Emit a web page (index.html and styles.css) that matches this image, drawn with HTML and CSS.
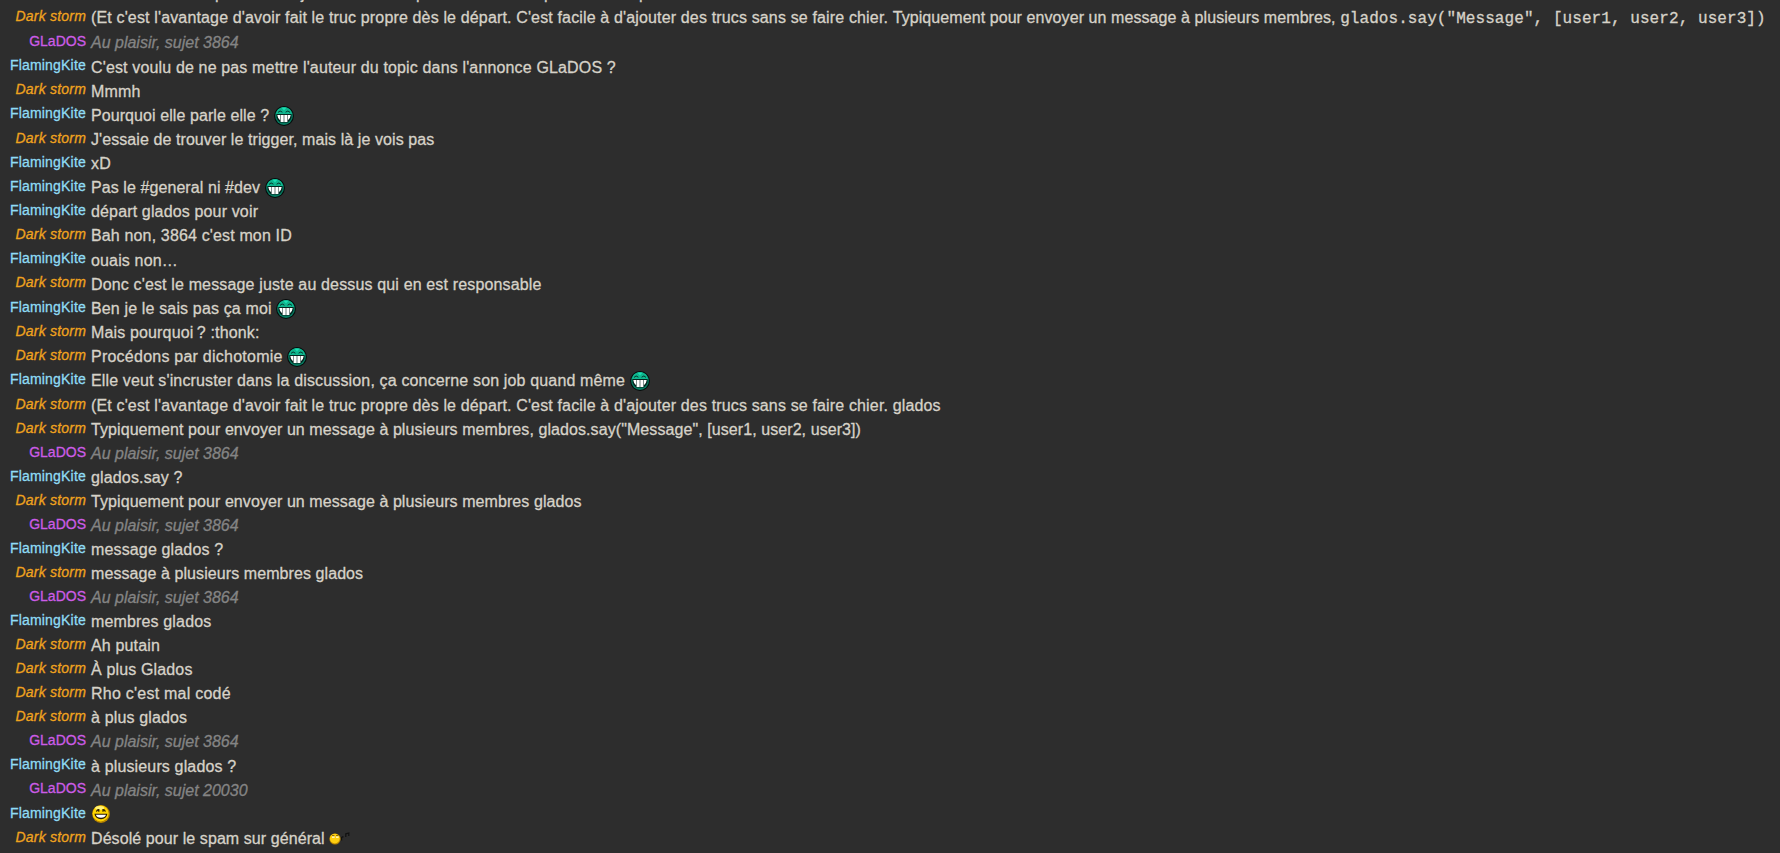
FILE: index.html
```html
<!DOCTYPE html>
<html lang="fr">
<head>
<meta charset="UTF-8">
<title>Chat</title>
<link rel="stylesheet" href="styles.css">
</head>
<body>

<svg class="defs" width="0" height="0">
  <symbol id="grin" viewBox="0 0 20 20">
    <circle cx="10" cy="10" r="9.9" fill="#050b0a"/>
    <circle cx="10" cy="10" r="8.9" fill="#067a60"/>
    <path d="M1.8 8 Q3 1.4 10 1.2 Q17 1.4 18.2 8z" fill="#0fb68e"/>
    <path d="M7.4 1.6h5.2L10 4.4z" fill="#1be0b4"/>
    <path d="M4 6.4 Q6 3.6 8.4 6.2 M11.6 6.2 Q14 3.6 16 6.4" fill="none" stroke="#04352b" stroke-width="1"/>
    <path d="M2.6 8 H17.4 V11.6 Q16.8 14.6 13.8 16.6 H6.2 Q3.2 14.6 2.6 11.6z" fill="#04251e"/>
    <path d="M3.3 8.9h2.8v5.4q-2.4-1.6-2.8-5.4z M6.6 8.9h3.1v7.1h-3.1z M10.3 8.9h3.1v7.1h-3.1z M13.9 8.9h2.8q-.4 3.8-2.8 5.4z" fill="#fff"/>
  </symbol>
  <symbol id="laugh" viewBox="0 0 18 18">
    <circle cx="9" cy="9" r="8.9" fill="#b98500"/>
    <circle cx="8.6" cy="8.4" r="8" fill="#ffd500"/>
    <ellipse cx="7.6" cy="3" rx="4.4" ry="1.9" fill="#fff27a"/>
    <path d="M4.4 6.6 Q5 4.6 6.8 4.6 V6.8 M13.4 6.6 Q12.8 4.6 11 4.6 V6.8" fill="none" stroke="#2b1c00" stroke-width="1.2"/>
    <path d="M2.4 8.8 H15.4 Q14.4 14.2 9 14.2 Q3.4 14.2 2.4 8.8z" fill="#2b1c00"/>
    <path d="M3.8 9.8 H14 Q13.2 12.8 9 12.8 Q4.6 12.8 3.8 9.8z" fill="#fff"/>
  </symbol>
  <symbol id="whistle" viewBox="0 0 22 14">
    <circle cx="6" cy="8" r="5.6" fill="#b98500"/>
    <circle cx="5.8" cy="7.6" r="4.9" fill="#ffcf10"/>
    <path d="M3 5.2h2.6v1.8H3z M7 5.2h2.6v1.8H7z" fill="#fff3b0"/>
    <path d="M3 4.6h2.4M7 4.6h2.4" stroke="#4a3300" stroke-width=".7"/>
    <path d="M12.6 9.6V6.4l1.8-.8M16.8 6V2.8l3-.8v3" fill="none" stroke="#111" stroke-width="1.2"/>
  </symbol>
</svg>

<div class="chat">
  <div class="row cut"><span>p</span><span>j</span><span>p</span><span>p</span><span>p</span></div>
  <div class="row tall"><span class="name storm">Dark storm</span><span class="msg">(Et c'est l'avantage d'avoir fait le truc propre dès le départ. C'est facile à d'ajouter des trucs sans se faire chier. <span class="snug">Typiquement pour envoyer un message à plusieurs membres, </span><code>glados.say("Message", [user1, user2, user3])</code></span></div>
  <div class="row"><span class="name glados">GLaDOS</span><span class="msg bot">Au plaisir, sujet 3864</span></div>
  <div class="row low"><span class="name kite">FlamingKite</span><span class="msg">C'est voulu de ne pas mettre l'auteur du topic dans l'annonce GLaDOS ?</span></div>
  <div class="row low"><span class="name storm">Dark storm</span><span class="msg">Mmmh</span></div>
  <div class="row tall low"><span class="name kite">FlamingKite</span><span class="msg snug">Pourquoi elle parle elle ? <svg class="smiley"><use href="#grin"/></svg></span></div>
  <div class="row"><span class="name storm">Dark storm</span><span class="msg snug">J'essaie de trouver le trigger, mais là je vois pas</span></div>
  <div class="row"><span class="name kite">FlamingKite</span><span class="msg">xD</span></div>
  <div class="row"><span class="name kite">FlamingKite</span><span class="msg snug">Pas le #general ni #dev <svg class="smiley"><use href="#grin"/></svg></span></div>
  <div class="row"><span class="name kite">FlamingKite</span><span class="msg">départ glados pour voir</span></div>
  <div class="row"><span class="name storm">Dark storm</span><span class="msg">Bah non, 3864 c'est mon ID</span></div>
  <div class="row low"><span class="name kite">FlamingKite</span><span class="msg">ouais non…</span></div>
  <div class="row tall low"><span class="name storm">Dark storm</span><span class="msg">Donc c'est le message juste au dessus qui en est responsable</span></div>
  <div class="row"><span class="name kite">FlamingKite</span><span class="msg">Ben je le sais pas ça moi <svg class="smiley"><use href="#grin"/></svg></span></div>
  <div class="row"><span class="name storm">Dark storm</span><span class="msg">Mais pourquoi&#8239;? :thonk:</span></div>
  <div class="row"><span class="name storm">Dark storm</span><span class="msg wide">Procédons par dichotomie <svg class="smiley"><use href="#grin"/></svg></span></div>
  <div class="row tall"><span class="name kite">FlamingKite</span><span class="msg">Elle veut s'incruster dans la discussion, ça concerne son job quand même <svg class="smiley"><use href="#grin"/></svg></span></div>
  <div class="row"><span class="name storm">Dark storm</span><span class="msg">(Et c'est l'avantage d'avoir fait le truc propre dès le départ. C'est facile à d'ajouter des trucs sans se faire chier. glados</span></div>
  <div class="row"><span class="name storm">Dark storm</span><span class="msg snug">Typiquement pour envoyer un message à plusieurs membres, glados.say("Message", [user1, user2, user3])</span></div>
  <div class="row"><span class="name glados">GLaDOS</span><span class="msg bot">Au plaisir, sujet 3864</span></div>
  <div class="row"><span class="name kite">FlamingKite</span><span class="msg">glados.say ?</span></div>
  <div class="row"><span class="name storm">Dark storm</span><span class="msg snug">Typiquement pour envoyer un message à plusieurs membres glados</span></div>
  <div class="row"><span class="name glados">GLaDOS</span><span class="msg bot">Au plaisir, sujet 3864</span></div>
  <div class="row"><span class="name kite">FlamingKite</span><span class="msg">message glados ?</span></div>
  <div class="row"><span class="name storm">Dark storm</span><span class="msg snug">message à plusieurs membres glados</span></div>
  <div class="row"><span class="name glados">GLaDOS</span><span class="msg bot">Au plaisir, sujet 3864</span></div>
  <div class="row"><span class="name kite">FlamingKite</span><span class="msg">membres glados</span></div>
  <div class="row"><span class="name storm">Dark storm</span><span class="msg">Ah putain</span></div>
  <div class="row"><span class="name storm">Dark storm</span><span class="msg">À plus Glados</span></div>
  <div class="row"><span class="name storm">Dark storm</span><span class="msg wide">Rho c'est mal codé</span></div>
  <div class="row"><span class="name storm">Dark storm</span><span class="msg">à plus glados</span></div>
  <div class="row"><span class="name glados">GLaDOS</span><span class="msg bot">Au plaisir, sujet 3864</span></div>
  <div class="row low"><span class="name kite">FlamingKite</span><span class="msg">à plusieurs glados ?</span></div>
  <div class="row tall low"><span class="name glados">GLaDOS</span><span class="msg bot">Au plaisir, sujet 20030</span></div>
  <div class="row"><span class="name kite">FlamingKite</span><span class="msg"><svg class="smiley laugh"><use href="#laugh"/></svg></span></div>
  <div class="row"><span class="name storm">Dark storm</span><span class="msg snug">Désolé pour le spam sur général <svg class="smiley whistle"><use href="#whistle"/></svg></span></div>
</div>

</body>
</html>
```
FILE: styles.css
```css
body {
  margin: 0;
  height: 853px;
  overflow: hidden;
  background: #2d2d2d;
  color: #d6d2c8;
  font-family: "Liberation Sans", Arial, sans-serif;
  font-size: 16px;
  -webkit-text-stroke: 0.3px;
}
.defs {
  display: block;
}
.chat {
  margin-top: -19px;
}
.row {
  display: flex;
  height: 24px;
  white-space: nowrap;
}
.tall {
  height: 25px;
}
/* end of the message scrolled out of view */
.cut {
  display: grid;
  grid-template-columns: 86px 115px 128px 95px 20px;
  padding-left: 215px;
  line-height: 25px;
}
.name {
  width: 86px;
  margin-right: 5px;
  text-align: right;
  font-size: 14px;
  line-height: 22px;
  letter-spacing: 0.2px;
}
.msg {
  line-height: 25px;
  letter-spacing: 0.15px;
}
.snug {
  letter-spacing: 0.08px;
}
.wide {
  letter-spacing: 0.24px;
}
.low .msg {
  padding-top: 1px;
}
.storm {
  color: #f0a31e;
  font-style: italic;
}
.glados {
  color: #cc5ce6;
  letter-spacing: 0;
}
.kite {
  color: #8fdcf5;
}
.bot {
  color: #848484;
  font-style: italic;
  letter-spacing: 0;
}
code {
  font-family: "Liberation Mono", "Courier New", monospace;
  font-size: 16px;
  letter-spacing: 0.07px;
}
.smiley {
  width: 20px;
  height: 20px;
  vertical-align: -1px;
  margin: -4px 0;
}
.laugh {
  width: 18px;
  height: 18px;
  margin-left: 1px;
  vertical-align: 1px;
}
.whistle {
  width: 22px;
  height: 14px;
  vertical-align: 3px;
}
```
